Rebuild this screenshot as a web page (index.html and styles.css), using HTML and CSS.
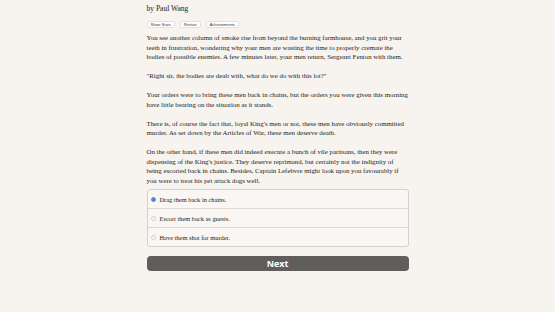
FILE: index.html
```html
<!DOCTYPE html>
<html lang="en">
<head>
    <meta charset="UTF-8">
    <title>by Paul Wang</title>
    <link rel="stylesheet" href="styles.css">
</head>
<body>
    <div class="story-container">
        <header class="story-header">
            <div class="author">by Paul Wang</div>
            <div class="header-buttons">
                <button class="small-button">Show Stats</button>
                <button class="small-button">Restart</button>
                <button class="small-button">Achievements</button>
            </div>
        </header>

        <main class="story-text">
            <p>You see another column of smoke rise from beyond the burning farmhouse, and you grit your teeth in frustration, wondering why your men are wasting the time to properly cremate the bodies of possible enemies. A few minutes later, your men return, Sergeant Fenton with them.</p>
            <p>"Right sir, the bodies are dealt with, what do we do with this lot?"</p>
            <p>Your orders were to bring these men back in chains, but the orders you were given this morning have little bearing on the situation as it stands.</p>
            <p>There is, of course the fact that, loyal King's men or not, these men have obviously committed murder. As set down by the Articles of War, these men deserve death.</p>
            <p>On the other hand, if these men did indeed execute a bunch of vile partisans, then they were dispensing of the King's justice. They deserve reprimand, but certainly not the indignity of being escorted back in chains. Besides, Captain Lefebvre might look upon you favourably if you were to treat his pet attack dogs well.</p>
        </main>

        <form class="choices">
            <label class="choice">
                <input type="radio" name="choice" checked>
                <span>Drag them back in chains.</span>
            </label>
            <label class="choice">
                <input type="radio" name="choice">
                <span>Escort them back as guests.</span>
            </label>
            <label class="choice">
                <input type="radio" name="choice">
                <span>Have them shot for murder.</span>
            </label>
        </form>

        <button class="next-button">Next</button>
    </div>
</body>
</html>
```

FILE: styles.css
```css
body {
    margin: 0;
    background: #f7f3ef;
    color: #242322;
    font-family: 'Liberation Serif', Georgia, serif;
}

.story-container {
    width: 262px;
    margin: 0 auto;
    padding-top: 4px;
}

.author {
    font-size: 7.5px;
    line-height: 10px;
}

.header-buttons {
    display: flex;
    gap: 5px;
    margin-top: 7px;
}

.small-button {
    font-family: 'Liberation Sans', Arial, sans-serif;
    font-size: 4px;
    color: #333;
    background: #fff;
    border: 1px solid #e4e0dc;
    border-radius: 2px;
    padding: 0 3px;
    line-height: 5px;
}

.story-text {
    margin-top: 5px;
    font-size: 6.83px;
    line-height: 9.5px;
}

.story-text p {
    margin: 0 0 9.5px 0;
}

.story-text p:last-child {
    margin-bottom: 0;
}

.choices {
    margin-top: 4px;
    border: 1px solid #d4d0cc;
    border-radius: 3px;
    background: #f9f6f3;
}

.choice {
    display: flex;
    align-items: center;
    height: 18px;
    padding-left: 3px;
    font-size: 6.4px;
    border-top: 1px solid #dcd8d4;
}

.choice:first-child {
    border-top: none;
}

.choice input {
    width: 5px;
    height: 5px;
    margin: 0 4px 0 0;
    accent-color: #3a7bd5;
    opacity: 0.3;
}

.choice input:checked {
    opacity: 1;
}

.next-button {
    display: block;
    width: 100%;
    height: 15px;
    margin-top: 9px;
    padding: 0;
    background: #5f5e5c;
    color: #fff;
    border: none;
    border-radius: 4px;
    font-family: 'Open Sans', 'Liberation Sans', sans-serif;
    font-weight: bold;
    font-size: 9px;
    box-shadow: 0 3px 2px -1px #fff, 0 4px 1px -1px #e8e4e0;
}
```
